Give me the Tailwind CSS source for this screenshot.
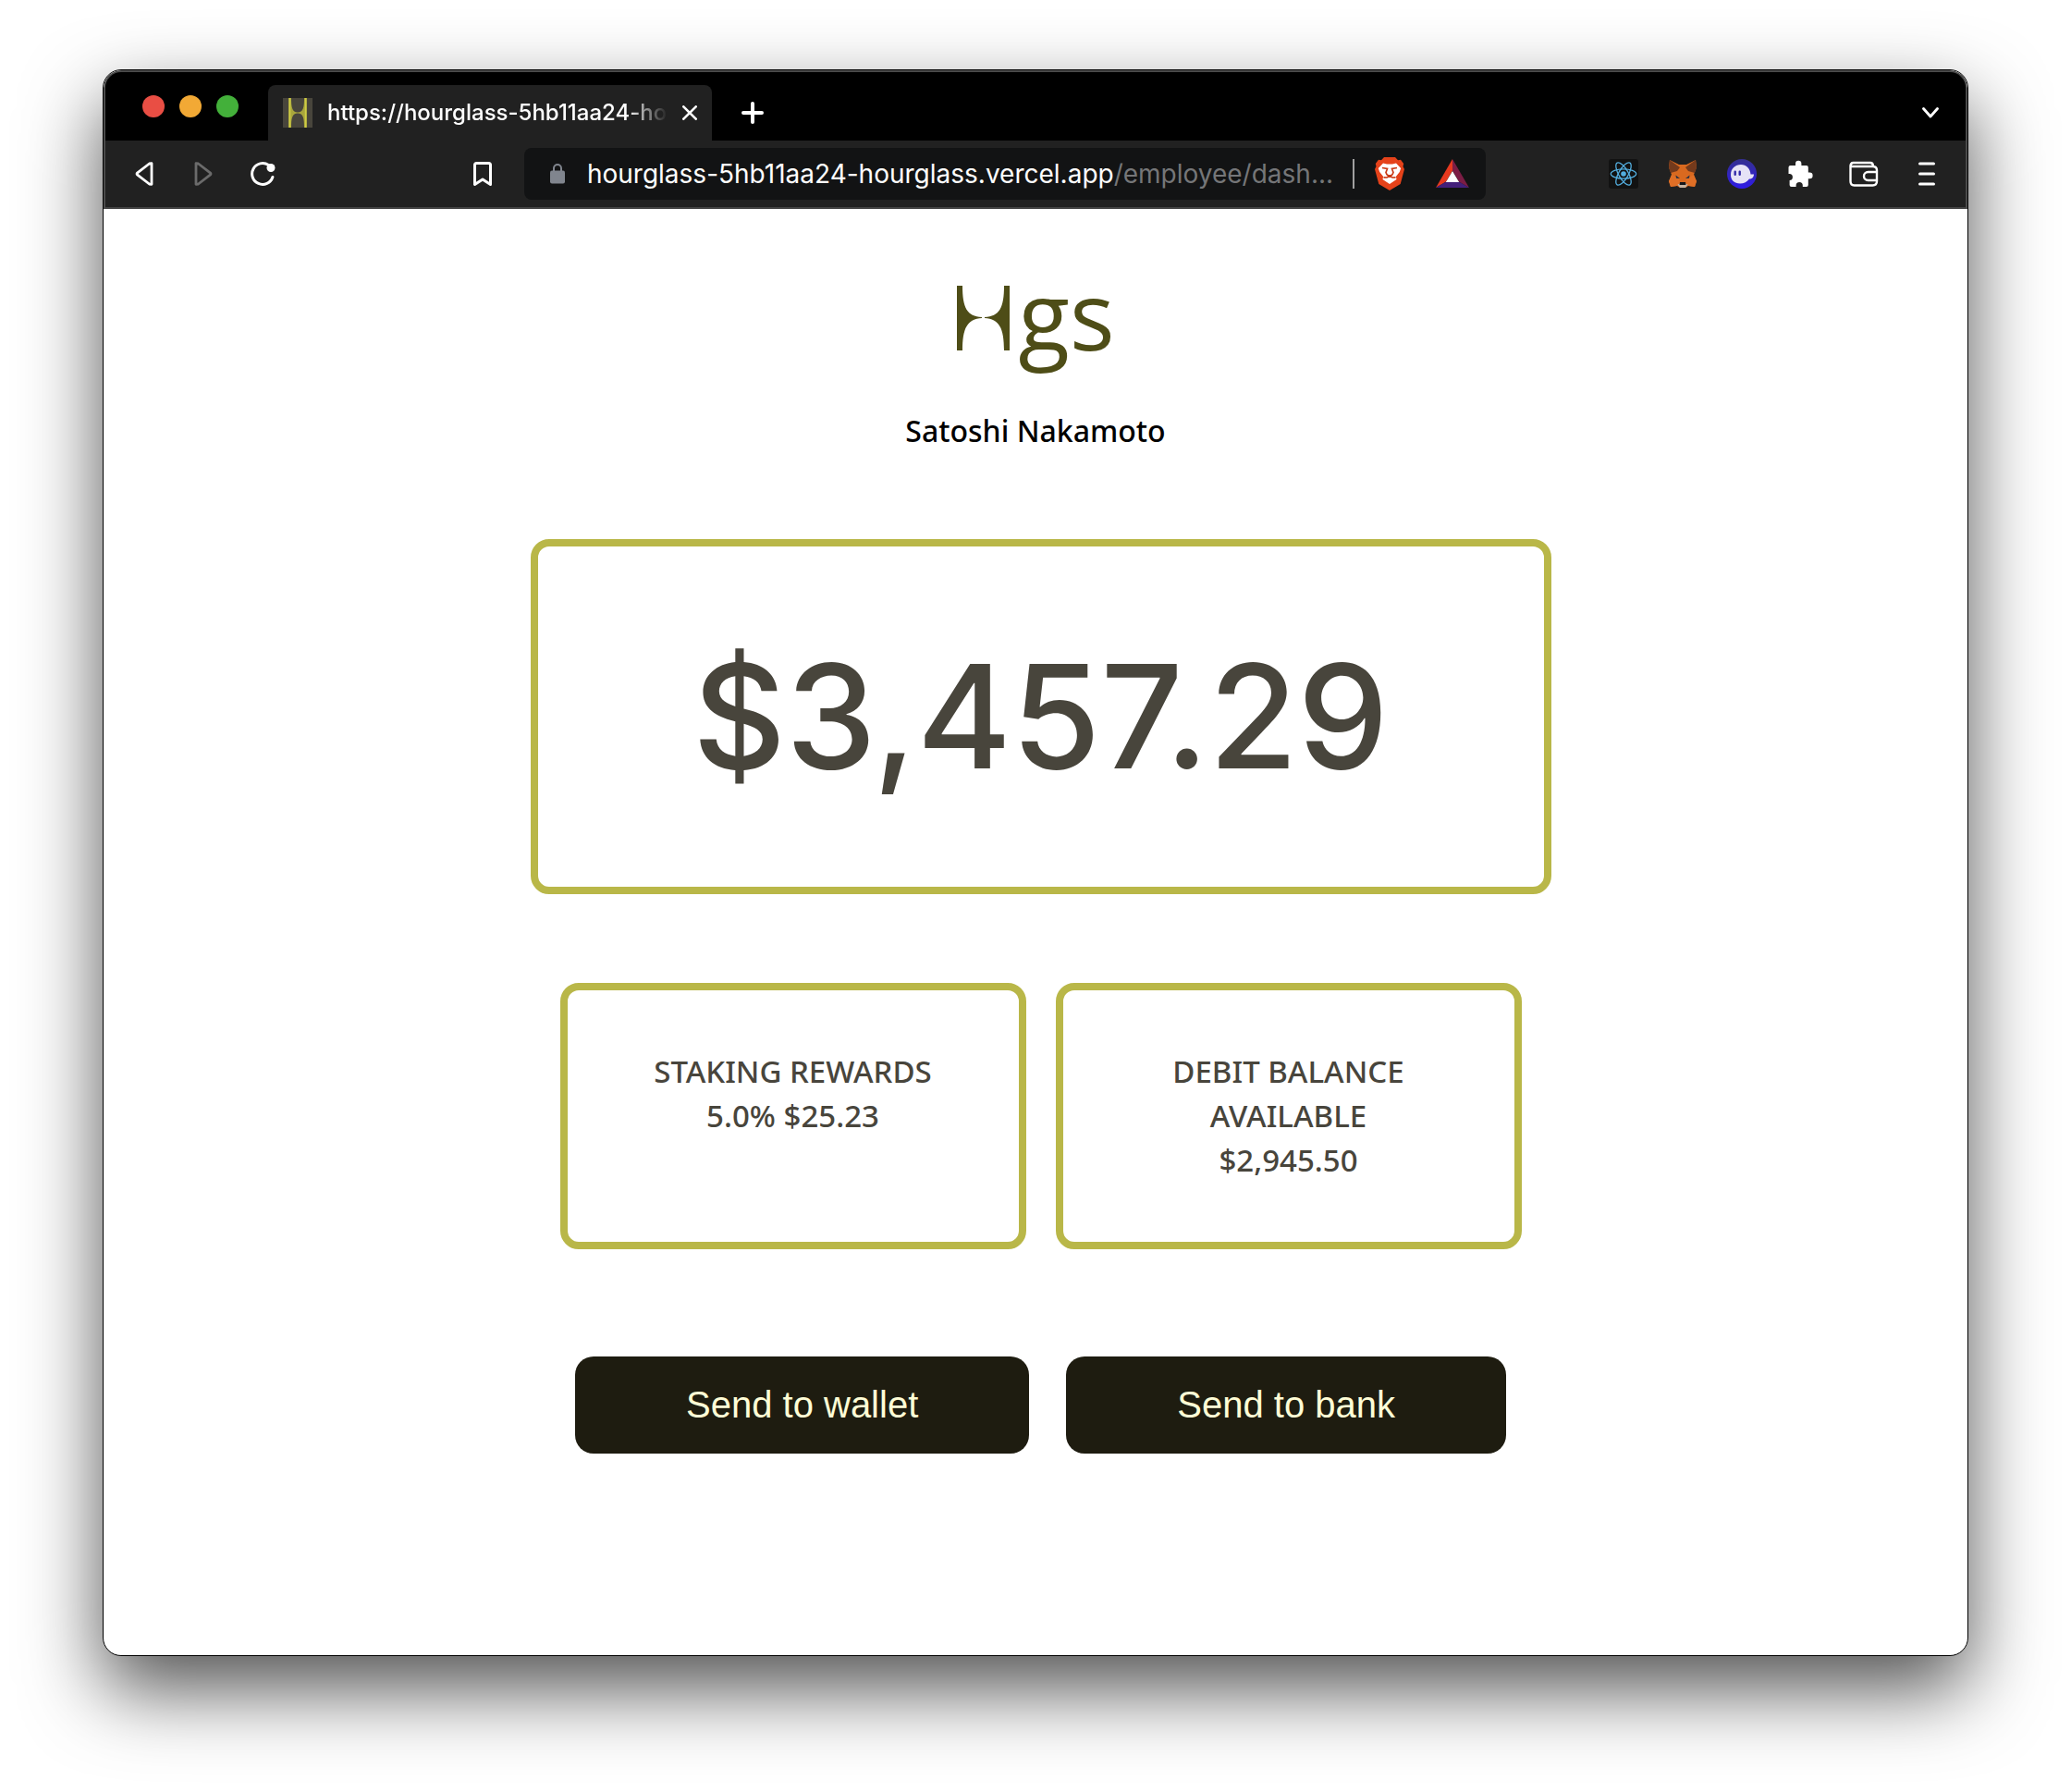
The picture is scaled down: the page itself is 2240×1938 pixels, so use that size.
<!DOCTYPE html>
<html lang="en">
<head>
<meta charset="utf-8">
<meta name="viewport" content="width=device-width, initial-scale=1">
<title>Hourglass – Employee dashboard</title>
<script src="https://cdn.jsdelivr.net/npm/@tailwindcss/browser@4"></script>
</head>
<body class="flex min-h-screen bg-white px-[111px] pt-[75px] pb-[147px] font-['Inter',sans-serif]">
<div class="flex min-w-0 flex-1 flex-col overflow-hidden rounded-[20px] border border-black bg-white shadow-[0_36px_84px_rgba(0,0,0,0.68)]">

  <!-- Browser chrome -->
  <header class="rounded-t-[19px] border-2 border-b-0 border-[#4a4a4a] bg-black text-white">
    <!-- Tab strip -->
    <div class="flex h-[74px] items-end pr-[22px] pl-10">
      <div class="flex gap-4 self-start pt-[25px]">
        <span class="size-6 rounded-full bg-[#e94e44]"></span>
        <span class="size-6 rounded-full bg-[#f2a935]"></span>
        <span class="size-6 rounded-full bg-[#43b03a]"></span>
      </div>
      <div class="ml-8 flex h-15 w-[480px] items-center rounded-t-lg bg-[#212121] px-4">
        <svg class="size-8 shrink-0" viewBox="0 0 32 32" aria-hidden="true">
          <rect width="32" height="32" fill="#48453c"/>
          <path d="M6 0h3c0 10 1 15.500 7 15.500v1C10 16.500 9 22 9 32H6zM26 0h-3c0 10-1 15.500-7 15.500v1c6 0 7 5.500 7 15.500h3z" fill="#a9a63c"/>
          <path d="M7.500 0v32M24.500 0v32" stroke="#cfcc45" stroke-width="1.500"/>
        </svg>
        <span class="ml-4 min-w-0 flex-1 overflow-hidden text-[24px] leading-8 font-medium whitespace-nowrap [mask-image:linear-gradient(to_right,#000_88%,transparent_100%)]">https://hourglass-5hb11aa24-ho</span>
        <button type="button" aria-label="Close tab" class="ml-4 flex size-4 shrink-0 items-center justify-center">
          <svg class="size-4" viewBox="0 0 16 16" fill="none" stroke="#fff" stroke-width="2.600" stroke-linecap="round"><path d="M1.300 1.300l13.400 13.400M14.700 1.300L1.300 14.700"/></svg>
        </button>
      </div>
      <button type="button" aria-label="New tab" class="ml-8 flex h-15 w-6 items-center justify-center">
        <svg class="size-6" viewBox="0 0 24 24" fill="none" stroke="#fff" stroke-width="4" stroke-linecap="round"><path d="M12 2v20M2 12h20"/></svg>
      </button>
      <button type="button" aria-label="Search tabs" class="ml-auto flex h-15 w-8 items-center justify-center">
        <svg class="h-3 w-[18px]" viewBox="0 0 18 12" fill="none" stroke="#fff" stroke-width="2.800" stroke-linecap="round" stroke-linejoin="round"><path d="M1.500 1.500L9 10l7.500-8.500"/></svg>
      </button>
    </div>

    <!-- Toolbar -->
    <div class="flex h-[74px] items-center border-b-2 border-[#444] bg-[#212121] pr-[26px] pl-8">
      <div class="flex flex-[420_1_0%] items-center">
        <button type="button" aria-label="Back"><svg class="h-7 w-5" viewBox="0 0 20 28" fill="none" stroke="#fff" stroke-width="2.800" stroke-linejoin="round"><path d="M18 2.700v22.600L15.500 25 2.700 15.200q-1.400-1.200 0-2.400L15.500 3z"/></svg></button>
        <button type="button" aria-label="Forward" disabled class="ml-11"><svg class="h-7 w-5" viewBox="0 0 20 28" fill="none" stroke="#6b6b6b" stroke-width="2.800" stroke-linejoin="round"><path d="M2 2.700v22.600l2.500-.3 12.800-9.800q1.400-1.200 0-2.400L4.500 3z"/></svg></button>
        <button type="button" aria-label="Reload" class="ml-10"><svg class="size-7" viewBox="0 0 28 28" fill="none" stroke="#fff" stroke-width="3" stroke-linecap="round"><path d="M20.500 4.600A11.400 11.400 0 1 0 24.900 17.500"/><circle cx="23" cy="7.500" r="4.500" fill="#fff" stroke="none"/></svg></button>
        <button type="button" aria-label="Bookmark" class="mr-[34px] ml-auto"><svg class="h-7 w-[22px]" viewBox="0 0 22 28" fill="none" stroke="#fff" stroke-width="3" stroke-linejoin="round"><path d="M2.500 4.500q0-2 2-2h13q2 0 2 2v21L11 20l-8.500 5.500z"/></svg></button>
      </div>
      <div class="flex h-14 w-[1040px] min-w-0 items-center rounded-lg bg-[#121314] pr-[18px] pl-7">
        <svg class="h-[22px] w-4 shrink-0" viewBox="0 0 16 22" aria-hidden="true"><rect y="7.500" width="16" height="14" rx="2" fill="#80858e"/><path d="M4 8V5a4 4 0 0 1 8 0v3" fill="none" stroke="#80858e" stroke-width="2"/></svg>
        <a href="#" class="ml-6 min-w-0 flex-1 overflow-hidden text-[28px] leading-9 text-ellipsis whitespace-nowrap">hourglass-5hb11aa24-hourglass.vercel.app<span class="text-[#757678]">/employee/dash...</span></a>
        <span class="ml-4 h-8 w-0.5 bg-[#a0a0a0]"></span>
        <button type="button" aria-label="Brave Shields" class="ml-[22px]">
          <svg class="h-9 w-8" viewBox="0 0 32 36"><path d="M10 0h12l3 3.200 3-.4 3.200 4.200-.7 3L32 13l-4.300 16L16 36 4.300 29 0 13l1.500-3-.7-3L4 2.800l3 .4z" fill="#e5421a"/><path d="M9 6.500L13 7.500h6l4-1L28.200 12l-1.400 4-4 5 .7 3L16 29l-7.500-5 .7-3-4-5-1.400-4z" fill="#fff"/><path d="M8 11.500l5.500 1L12 16.500l1 2.300L16 21l3-2.200 1-2.300-1.500-4 5.500-1M9.500 21.800l3.500.2 3-1.700 3 1.700 3.500-.2" fill="none" stroke="#c93a16" stroke-width="1.700"/></svg>
        </button>
        <button type="button" aria-label="Rewards" class="ml-[34px]">
          <svg class="h-8 w-9" viewBox="0 0 36 32"><path d="M18 0L0 31l11-6.500 7-12z" fill="#e6391f"/><path d="M18 0l18 31-11-6.500-7-12z" fill="#7b1d45"/><path d="M0 31h36l-11-6.500H11z" fill="#43207a"/><path d="M18 13l7.200 12H10.800z" fill="#fff"/></svg>
        </button>
      </div>
      <div class="flex flex-[492_1_0%] items-center justify-end gap-8">
        <button type="button" aria-label="React Developer Tools">
          <svg class="size-8" viewBox="0 0 32 32"><rect width="32" height="32" rx="3" fill="#121212"/><circle cx="16" cy="16" r="2.800" fill="#53aedf"/><g fill="none" stroke="#53aedf" stroke-width="1.300"><ellipse cx="16" cy="16" rx="13.700" ry="5.200"/><ellipse cx="16" cy="16" rx="13.700" ry="5.200" transform="rotate(60 16 16)"/><ellipse cx="16" cy="16" rx="13.700" ry="5.200" transform="rotate(120 16 16)"/></g></svg>
        </button>
        <button type="button" aria-label="MetaMask">
          <svg class="size-8" viewBox="0 0 32 32"><path d="M2 1l10 5h8l10-5 1 8-3 8 3 7-2 6-7-1-3 2h-6l-3-2-7 1-2-6 3-7-3-8z" fill="#d9691f"/><path d="M2 1l11 8-3 4-7 2-2-6zM30 1L19 9l3 4 7 2 2-6z" fill="#743a1c"/><path d="M1 24l3-7 8 4 1 7-3 1-7 1zM31 24l-3-7-8 4-1 7 3 1 7 1z" fill="#e06f26"/><path d="M8.500 17.500l4.500 3.500-4-.3zM23.500 17.500L19 21l4-.3z" fill="#262f42"/><path d="M10.500 27.500l2.500-1h6l2.500 1L19 31h-6z" fill="#c7b3a0"/><path d="M13 25h6l.5 3h-7z" fill="#16161a"/></svg>
        </button>
        <button type="button" aria-label="Phantom">
          <svg class="size-8" viewBox="0 0 32 32"><defs><linearGradient id="ph" x1="0" y1="0" x2="0" y2="1"><stop offset="0" stop-color="#35308f"/><stop offset="1" stop-color="#2f1be8"/></linearGradient></defs><circle cx="16" cy="16" r="16" fill="url(#ph)"/><path d="M4 17C4 10 9 6 15 6s10 4.500 10.500 10.500H29c0 3-2 5-5 5C22 24.500 18 26.500 14 26.500 8 26.500 4 23 4 17z" fill="#e6e2f6"/><rect x="7.500" y="12.500" width="2.400" height="5.500" rx="1.200" fill="#3229a8"/><rect x="12.500" y="12.500" width="2.400" height="5.500" rx="1.200" fill="#3229a8"/></svg>
        </button>
        <button type="button" aria-label="Extensions">
          <svg class="size-8" viewBox="0 0 32 32" fill="#fff"><path d="M4.500 7H10V5a3.200 3.200 0 0 1 6.400 0v2h5.400q2 0 2 2v5.600h1.500a3.300 3.300 0 0 1 0 6.600h-1.500V28q0 2-2 2h-4v-1.500a3.600 3.600 0 0 0-7.200 0V30h-5q-2 0-2-2v-5H3.400a3.500 3.500 0 0 0 0-7H2.500V9q0-2 2-2z"/></svg>
        </button>
        <button type="button" aria-label="Wallet" class="ml-1">
          <svg class="size-8" viewBox="0 0 32 32" fill="none" stroke="#fff" stroke-width="2.400"><path d="M1.500 8v16q0 4.500 4 4.500h20q4.500 0 4.500-4.500V12q0-4-4.500-4zq0-4 3-4H23q3 0 3 4"/><path d="M30 14H20.500a4.500 4.500 0 0 0 0 9H30"/></svg>
        </button>
        <button type="button" aria-label="Menu" class="ml-1">
          <svg class="size-8" viewBox="0 0 32 32" fill="none" stroke="#fff" stroke-width="3" stroke-linecap="round"><path d="M8.500 5h15M8.500 16h15M8.500 27h15"/></svg>
        </button>
      </div>
    </div>
  </header>

  <!-- Dashboard -->
  <main class="flex flex-1 flex-col items-center px-8 pt-14 text-[#48453c]">
    <div class="flex items-start text-[#4e4d17]" role="img" aria-label="Hgs">
      <svg class="mt-[27px] h-[70px] w-[57px]" viewBox="0 0 57 70" fill="#4e4d17"><path d="M0 0h6c0 24 5 33 21 34v1C11 36 6 46 6 70H0zM57 0h-6c0 24-5 33-21 34v1c16 1 21 11 21 35h6z"/></svg>
      <span class="ml-2.5 font-['Open_Sans',sans-serif] text-[102px] leading-[116px] font-[380]">gs</span>
    </div>
    <h1 class="mt-11 font-['Noto_Sans',sans-serif] text-[32px] leading-12 font-medium text-black">Satoshi Nakamoto</h1>

    <div class="mt-[93px] w-full pl-[11px]">
      <div class="mx-auto flex w-full max-w-[1104px] flex-col">
        <section class="rounded-[20px] border-8 border-[#b9b748] px-16 py-16 text-center">
          <p class="text-[156px] leading-[240px] font-medium">$3,457.29</p>
        </section>
        <div class="mt-24 grid grid-cols-2 gap-8 px-8 text-center font-['Noto_Sans',sans-serif] text-[33px] leading-12 font-medium">
          <section class="rounded-[20px] border-8 border-[#b9b748] px-16 py-16">
            <h2>STAKING REWARDS</h2>
            <p>5.0% $25.23</p>
          </section>
          <section class="rounded-[20px] border-8 border-[#b9b748] px-16 py-16">
            <h2>DEBIT BALANCE AVAILABLE</h2>
            <p>$2,945.50</p>
          </section>
        </div>
        <div class="mt-29 flex justify-center gap-10 font-['Liberation_Sans',Arial,sans-serif] text-[40px] leading-[45px] text-[#fffdd6]">
          <button type="button" class="rounded-[20px] bg-[#1e1c10] px-30 py-[30px]">Send to wallet</button>
          <button type="button" class="rounded-[20px] bg-[#1e1c10] px-30 py-[30px]">Send to bank</button>
        </div>
      </div>
    </div>
  </main>
</div>
</body>
</html>
